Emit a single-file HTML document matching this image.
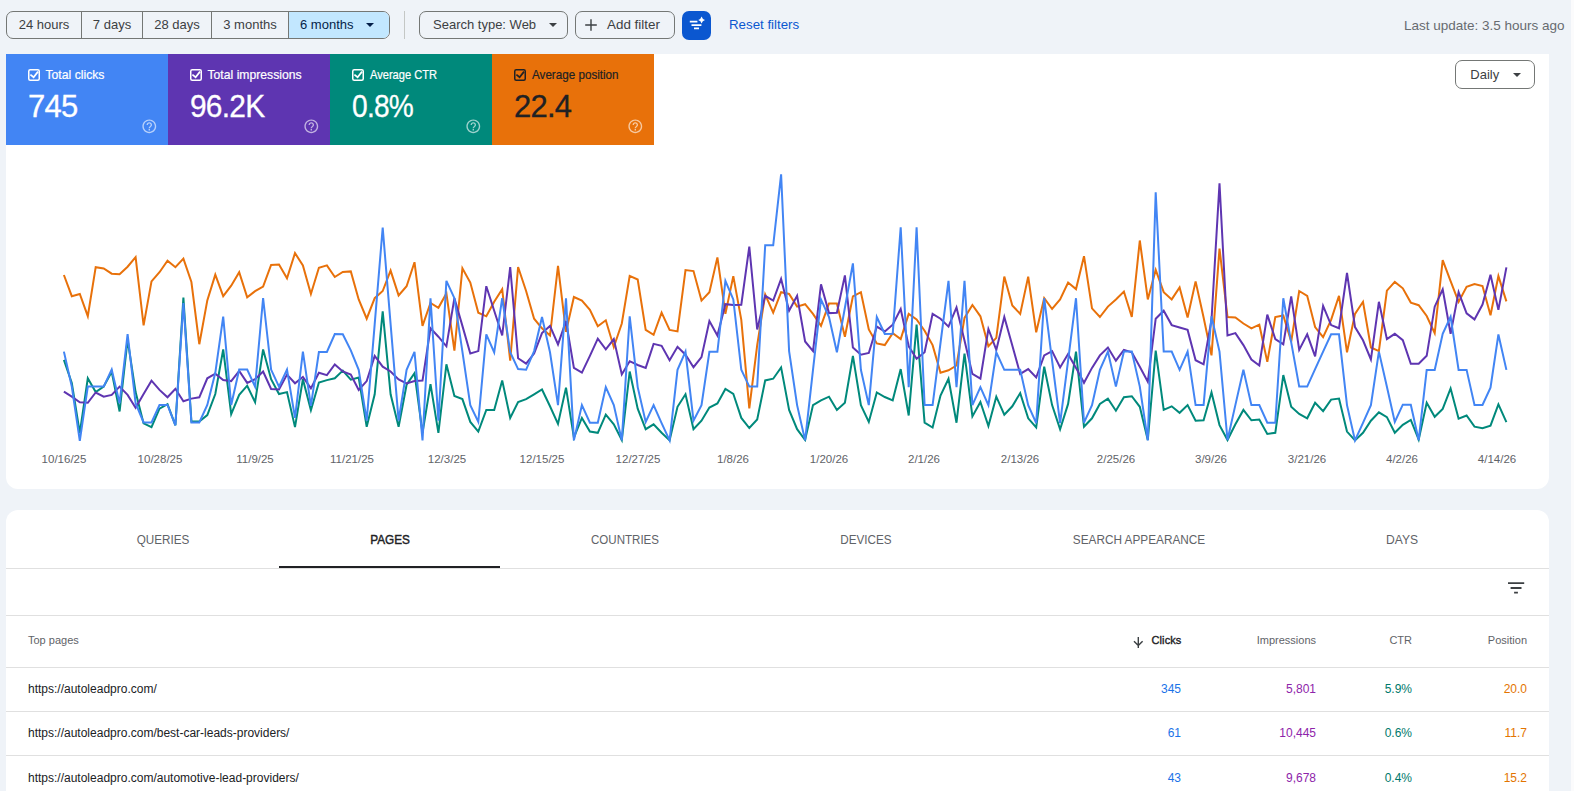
<!DOCTYPE html>
<html><head><meta charset="utf-8">
<style>
*{box-sizing:border-box;margin:0;padding:0}
html,body{width:1574px;height:791px;overflow:hidden;background:#eff3f8;font-family:"Liberation Sans",sans-serif;color:#3c4043}
.abs{position:absolute}
.seg{position:absolute;left:6px;top:11px;height:28px;width:384px;border:1px solid #747775;border-radius:7px;overflow:hidden;display:flex}
.seg div{height:26px;line-height:26px;font-size:13px;color:#3c4043;text-align:center;border-right:1px solid #747775;white-space:nowrap}
.seg div:last-child{border-right:none}
.chip{position:absolute;top:11px;height:28px;border:1px solid #747775;border-radius:7px;font-size:13px;line-height:26px;color:#3c4043;white-space:nowrap}
.card{position:absolute;left:6px;width:1543px;background:#fff}
.metric{position:absolute;top:54px;width:162px;height:91px;color:#fff}
.metric .cb{position:absolute;left:22px;top:15px;width:12px;height:12px}
.metric .lbl{position:absolute;left:39.5px;top:14px;font-size:12.2px;white-space:nowrap;-webkit-text-stroke:0.2px currentColor}
.metric .val{position:absolute;left:22px;top:35px;font-size:31px;letter-spacing:-0.8px;white-space:nowrap;-webkit-text-stroke:0.3px currentColor}
.metric .help{position:absolute;left:134.7px;top:63.6px;width:16.6px;height:16.6px}
.xl{position:absolute;top:453px;font-size:11.5px;color:#5f6368;white-space:nowrap;transform:translateX(-50%)}
.tab{position:absolute;top:532px;font-size:13.6px;color:#5f6368;white-space:nowrap;transform:translateX(-50%)}
.hl{position:absolute;left:6px;width:1543px;height:1px;background:#e0e0e0}
.th{position:absolute;top:634px;font-size:11px;color:#5f6368;white-space:nowrap}
.td{position:absolute;font-size:12px;white-space:nowrap}
.r{text-align:right}
</style></head><body>

<!-- top bar -->
<div class="seg">
  <div style="width:75px">24 hours</div>
  <div style="width:61px">7 days</div>
  <div style="width:69px">28 days</div>
  <div style="width:77px">3 months</div>
  <div style="position:relative;width:100px;background:#c2e7ff;color:#041e49;text-align:left;padding-left:11px">6 months<span class="abs" style="left:77px;top:11px;width:0;height:0;border-left:4px solid transparent;border-right:4px solid transparent;border-top:4px solid #041e49"></span></div>
</div>
<div class="abs" style="left:404px;top:11px;width:1px;height:28px;background:#c4c7c5"></div>
<div class="chip" style="left:419px;width:149px;padding-left:13px">Search type: Web<span class="abs" style="left:129px;top:11px;width:0;height:0;border-left:4px solid transparent;border-right:4px solid transparent;border-top:4px solid #3c4043"></span></div>
<div class="chip" style="left:575px;width:100px;padding-left:31px;font-size:13.4px">Add filter<svg class="abs" style="left:8px;top:6px" width="14" height="14" viewBox="0 0 14 14"><path d="M7 1.2v11.6M1.2 7h11.6" stroke="#3c4043" stroke-width="1.4"/></svg></div>
<div class="abs" style="left:682px;top:11px;width:29px;height:29px;background:#0b57d0;border-radius:7px">
  <svg width="29" height="29" viewBox="0 0 29 29"><path d="M7.8 10.6h7.6M9.5 14.1h9.9M12 17.4h5" stroke="#fff" stroke-width="1.7"/><path d="M19.6 5.6 Q20.3 8.3 23 9 Q20.3 9.7 19.6 12.4 Q18.9 9.7 16.2 9 Q18.9 8.3 19.6 5.6Z" fill="#fff"/></svg>
</div>
<div class="abs" style="left:729px;top:17px;font-size:13.3px;color:#0b57d0">Reset filters</div>
<div class="abs" style="left:1404px;top:17.6px;font-size:13.5px;color:#676b70;white-space:nowrap">Last update: 3.5 hours ago</div>

<!-- chart card -->
<div class="card" style="top:54px;height:435px;border-radius:0 0 12px 12px"></div>
<div class="metric" style="left:6px;background:#4285f4"><svg class="cb" viewBox="0 0 12 12"><rect x="0.75" y="0.75" width="10.5" height="10.5" rx="1.5" fill="none" stroke="#fff" stroke-width="1.5"/><path d="M2.4 5.6 5.6 8.2 10 2.6" fill="none" stroke="#fff" stroke-width="1.7"/></svg><div class="lbl">Total clicks</div><div class="val">745</div><svg class="help" viewBox="0 0 24 24"><path fill="rgba(255,255,255,.62)" d="M11 18h2v-2h-2v2zm1-16C6.48 2 2 6.48 2 12s4.48 10 10 10 10-4.48 10-10S17.52 2 12 2zm0 18c-4.41 0-8-3.59-8-8s3.59-8 8-8 8 3.59 8 8-3.59 8-8 8zm0-14c-2.210 0-4 1.79-4 4h2c0-1.1.9-2 2-2s2 .9 2 2c0 2-3 1.75-3 5h2c0-2.25 3-2.5 3-5 0-2.21-1.790-4-4-4z"/></svg></div>
<div class="metric" style="left:168px;background:#5e35b1"><svg class="cb" viewBox="0 0 12 12"><rect x="0.75" y="0.75" width="10.5" height="10.5" rx="1.5" fill="none" stroke="#fff" stroke-width="1.5"/><path d="M2.4 5.6 5.6 8.2 10 2.6" fill="none" stroke="#fff" stroke-width="1.7"/></svg><div class="lbl">Total impressions</div><div class="val" style="transform:scaleX(.965);transform-origin:0 0">96.2K</div><svg class="help" viewBox="0 0 24 24"><path fill="rgba(255,255,255,.62)" d="M11 18h2v-2h-2v2zm1-16C6.48 2 2 6.48 2 12s4.48 10 10 10 10-4.48 10-10S17.52 2 12 2zm0 18c-4.41 0-8-3.59-8-8s3.59-8 8-8 8 3.59 8 8-3.59 8-8 8zm0-14c-2.210 0-4 1.79-4 4h2c0-1.1.9-2 2-2s2 .9 2 2c0 2-3 1.75-3 5h2c0-2.25 3-2.5 3-5 0-2.21-1.790-4-4-4z"/></svg></div>
<div class="metric" style="left:330px;background:#00897b"><svg class="cb" viewBox="0 0 12 12"><rect x="0.75" y="0.75" width="10.5" height="10.5" rx="1.5" fill="none" stroke="#fff" stroke-width="1.5"/><path d="M2.4 5.6 5.6 8.2 10 2.6" fill="none" stroke="#fff" stroke-width="1.7"/></svg><div class="lbl" style="transform:scaleX(.91);transform-origin:0 0">Average CTR</div><div class="val" style="transform:scaleX(.906);transform-origin:0 0">0.8%</div><svg class="help" viewBox="0 0 24 24"><path fill="rgba(255,255,255,.62)" d="M11 18h2v-2h-2v2zm1-16C6.48 2 2 6.48 2 12s4.48 10 10 10 10-4.48 10-10S17.52 2 12 2zm0 18c-4.41 0-8-3.59-8-8s3.59-8 8-8 8 3.59 8 8-3.59 8-8 8zm0-14c-2.210 0-4 1.79-4 4h2c0-1.1.9-2 2-2s2 .9 2 2c0 2-3 1.75-3 5h2c0-2.25 3-2.5 3-5 0-2.21-1.790-4-4-4z"/></svg></div>
<div class="metric" style="left:492px;background:#e8710a;color:#202124"><svg class="cb" viewBox="0 0 12 12"><rect x="0.75" y="0.75" width="10.5" height="10.5" rx="1.5" fill="none" stroke="#202124" stroke-width="1.5"/><path d="M2.4 5.6 5.6 8.2 10 2.6" fill="none" stroke="#202124" stroke-width="1.7"/></svg><div class="lbl" style="transform:scaleX(.956);transform-origin:0 0">Average position</div><div class="val">22.4</div><svg class="help" viewBox="0 0 24 24"><path fill="rgba(255,255,255,.62)" d="M11 18h2v-2h-2v2zm1-16C6.48 2 2 6.48 2 12s4.48 10 10 10 10-4.48 10-10S17.52 2 12 2zm0 18c-4.41 0-8-3.59-8-8s3.59-8 8-8 8 3.59 8 8-3.59 8-8 8zm0-14c-2.210 0-4 1.79-4 4h2c0-1.1.9-2 2-2s2 .9 2 2c0 2-3 1.75-3 5h2c0-2.25 3-2.5 3-5 0-2.21-1.790-4-4-4z"/></svg></div>

<div class="abs" style="left:1455px;top:60px;width:80px;height:29px;border:1px solid #747775;border-radius:7px;font-size:13px;line-height:27px;padding-left:14.3px;color:#3c4043">Daily<span class="abs" style="left:57px;top:12px;width:0;height:0;border-left:4px solid transparent;border-right:4px solid transparent;border-top:4px solid #3c4043"></span></div>

<svg id="chart" class="abs" style="left:0;top:0" width="1574" height="491"><polyline fill="none" stroke="#e8710a" stroke-width="2" points="63.9,275.0 71.8,296.2 79.8,294.0 87.8,316.2 95.7,267.2 103.7,268.5 111.7,273.7 119.6,274.2 127.6,266.7 135.6,257.1 143.6,325.4 151.5,281.4 159.5,272.2 167.5,260.8 175.4,267.2 183.4,258.6 191.4,282.0 199.3,344.2 207.3,300.4 215.3,274.6 223.2,296.2 231.2,285.7 239.2,272.2 247.2,297.3 255.1,291.2 263.1,286.6 271.1,264.9 279.0,264.5 287.0,278.3 295.0,253.1 302.9,265.4 310.9,294.0 318.9,267.8 326.9,265.4 334.8,277.0 342.8,272.0 350.8,271.4 358.7,299.4 366.7,318.7 374.7,298.2 382.7,291.0 390.6,270.6 398.6,295.4 406.6,286.2 414.5,262.2 422.5,325.9 430.5,303.0 438.4,307.8 446.4,293.4 454.4,350.6 462.4,268.2 470.3,282.6 478.3,312.7 486.3,316.3 494.2,301.8 502.2,289.1 510.2,360.7 518.1,267.0 526.1,291.0 534.1,318.7 542.0,328.3 550.0,335.5 558.0,265.8 566.0,331.9 573.9,297.0 581.9,300.6 589.9,309.8 597.8,326.3 605.8,320.3 613.8,347.0 621.8,323.5 629.7,275.9 637.7,279.5 645.7,329.9 653.6,334.8 661.6,312.7 669.6,329.9 677.5,331.4 685.5,270.1 693.5,271.1 701.5,300.6 709.4,292.2 717.4,257.4 725.4,313.9 733.3,276.1 741.3,319.9 749.3,408.3 757.2,345.1 765.2,294.6 773.2,312.7 781.1,292.2 789.1,293.9 797.1,306.6 805.1,304.2 813.0,313.9 821.0,325.9 829.0,303.5 836.9,303.5 844.9,336.7 852.9,296.3 860.9,292.2 868.8,329.5 876.8,343.4 884.8,345.1 892.7,333.1 900.7,339.1 908.7,313.9 916.6,319.4 924.6,330.7 932.6,345.1 940.5,372.7 948.5,370.3 956.5,365.5 964.5,317.9 972.4,305.0 980.4,316.3 988.4,346.3 996.3,337.9 1004.3,276.6 1012.3,305.4 1020.2,313.9 1028.2,276.6 1036.2,332.3 1044.2,298.2 1052.1,309.0 1060.1,299.4 1068.1,282.6 1076.0,289.1 1084.0,256.2 1092.0,308.3 1099.9,317.0 1107.9,306.6 1115.9,299.4 1123.9,291.5 1131.8,317.0 1139.8,240.5 1147.8,299.4 1155.7,269.9 1163.7,292.2 1171.7,299.4 1179.6,287.4 1187.6,317.5 1195.6,281.4 1203.6,317.5 1211.5,355.4 1219.5,248.5 1227.5,317.0 1235.4,317.5 1243.4,323.5 1251.4,328.3 1259.3,324.7 1267.3,361.9 1275.3,317.0 1283.3,315.5 1291.2,341.5 1299.2,291.0 1307.2,295.8 1315.1,327.1 1323.1,337.2 1331.1,319.9 1339.0,295.8 1347.0,352.3 1355.0,313.9 1363.0,301.8 1370.9,347.5 1378.9,351.1 1386.9,290.6 1394.8,281.9 1402.8,288.3 1410.8,302.6 1418.7,305.2 1426.7,316.0 1434.7,333.2 1442.7,260.2 1450.6,281.1 1458.6,301.9 1466.6,286.8 1474.5,284.1 1482.5,286.0 1490.5,315.2 1498.4,276.1 1506.4,301.4"/>
<polyline fill="none" stroke="#00897b" stroke-width="2" points="63.9,359.9 71.8,382.9 79.8,433.0 87.8,378.3 95.7,392.1 103.7,386.6 111.7,371.8 119.6,411.5 127.6,339.6 135.6,392.1 143.6,423.4 151.5,427.1 159.5,408.7 167.5,404.1 175.4,425.3 183.4,297.6 191.4,421.6 199.3,421.6 207.3,415.1 215.3,394.0 223.2,349.4 231.2,414.2 239.2,394.9 247.2,385.7 255.1,402.2 263.1,349.4 271.1,379.2 279.0,394.0 287.0,392.1 295.0,427.1 302.9,379.2 310.9,410.2 318.9,382.5 326.9,380.1 334.8,378.3 342.8,370.6 350.8,379.6 358.7,377.5 366.7,426.8 374.7,394.3 382.7,311.4 390.6,394.3 398.6,426.8 406.6,384.7 414.5,373.2 422.5,432.8 430.5,384.2 438.4,432.8 446.4,364.3 454.4,396.0 462.4,399.1 470.3,421.9 478.3,431.6 486.3,409.9 494.2,409.9 502.2,380.4 510.2,417.9 518.1,402.0 526.1,399.1 534.1,394.3 542.0,389.5 550.0,406.3 558.0,423.9 566.0,387.6 573.9,437.6 581.9,417.9 589.9,431.6 597.8,432.8 605.8,414.7 613.8,424.3 621.8,440.0 629.7,371.5 637.7,408.7 645.7,429.2 653.6,424.3 661.6,432.8 669.6,440.4 677.5,406.8 685.5,394.3 693.5,429.2 701.5,420.7 709.4,407.5 717.4,403.5 725.4,389.0 733.3,393.8 741.3,417.9 749.3,428.0 757.2,419.5 765.2,380.4 773.2,378.7 781.1,367.4 789.1,409.9 797.1,429.2 805.1,440.0 813.0,405.1 821.0,400.3 829.0,396.7 836.9,409.9 844.9,402.7 852.9,355.9 860.9,405.1 868.8,421.9 876.8,392.4 884.8,397.0 892.7,400.3 900.7,369.1 908.7,415.5 916.6,324.7 924.6,422.7 932.6,427.5 940.5,395.5 948.5,378.7 956.5,422.7 964.5,353.5 972.4,416.4 980.4,402.0 988.4,426.0 996.3,396.7 1004.3,414.7 1012.3,406.3 1020.2,393.1 1028.2,418.3 1036.2,427.5 1044.2,366.7 1052.1,405.1 1060.1,429.2 1068.1,403.9 1076.0,351.6 1084.0,426.8 1092.0,418.3 1099.9,403.9 1107.9,398.6 1115.9,410.7 1123.9,397.2 1131.8,396.2 1139.8,406.8 1147.8,440.0 1155.7,350.6 1163.7,409.9 1171.7,406.3 1179.6,412.8 1187.6,405.1 1195.6,420.7 1203.6,420.3 1211.5,392.4 1219.5,425.1 1227.5,440.0 1235.4,424.3 1243.4,409.9 1251.4,420.3 1259.3,419.5 1267.3,434.0 1275.3,432.8 1283.3,375.1 1291.2,406.8 1299.2,414.0 1307.2,418.3 1315.1,402.7 1323.1,411.1 1331.1,399.6 1339.0,398.6 1347.0,431.6 1355.0,440.4 1363.0,432.8 1370.9,420.7 1378.9,412.3 1386.9,417.1 1394.8,432.8 1402.8,424.9 1410.8,419.9 1418.7,439.7 1426.7,402.8 1434.7,416.8 1442.7,408.9 1450.6,388.4 1458.6,418.7 1466.6,415.5 1474.5,426.7 1482.5,428.3 1490.5,425.6 1498.4,404.4 1506.4,422.2"/>
<polyline fill="none" stroke="#5e35b1" stroke-width="2" points="63.9,391.6 71.8,396.7 79.8,402.2 87.8,402.8 95.7,392.5 103.7,396.7 111.7,394.9 119.6,386.6 127.6,394.9 135.6,407.8 143.6,394.0 151.5,380.7 159.5,389.9 167.5,397.3 175.4,388.8 183.4,401.3 191.4,398.6 199.3,397.3 207.3,378.3 215.3,373.7 223.2,380.1 231.2,381.1 239.2,370.9 247.2,382.9 255.1,379.2 263.1,371.5 271.1,389.0 279.0,389.4 287.0,374.6 295.0,383.3 302.9,377.0 310.9,388.4 318.9,372.8 326.9,375.2 334.8,364.5 342.8,371.5 350.8,374.6 358.7,390.0 366.7,381.1 374.7,355.9 382.7,366.7 390.6,371.5 398.6,379.4 406.6,383.5 414.5,381.1 422.5,380.6 430.5,328.3 438.4,336.7 446.4,346.3 454.4,298.2 462.4,325.9 470.3,353.5 478.3,351.1 486.3,286.2 494.2,310.8 502.2,335.5 510.2,267.0 518.1,358.3 526.1,363.6 534.1,353.5 542.0,333.1 550.0,325.9 558.0,344.4 566.0,321.1 573.9,367.9 581.9,372.7 589.9,355.9 597.8,338.6 605.8,349.4 613.8,339.1 621.8,374.4 629.7,361.2 637.7,365.0 645.7,367.9 653.6,343.9 661.6,345.8 669.6,360.2 677.5,346.8 685.5,354.7 693.5,367.2 701.5,357.1 709.4,321.1 717.4,335.5 725.4,304.2 733.3,305.0 741.3,304.7 749.3,246.6 757.2,329.5 765.2,295.8 773.2,300.6 781.1,279.0 789.1,310.7 797.1,295.8 805.1,341.5 813.0,351.1 821.0,284.3 829.0,313.1 836.9,312.7 844.9,275.4 852.9,347.5 860.9,354.7 868.8,353.0 876.8,326.6 884.8,331.4 892.7,324.7 900.7,309.0 908.7,346.3 916.6,358.8 924.6,352.3 932.6,313.9 940.5,318.7 948.5,326.6 956.5,307.4 964.5,340.6 972.4,373.9 980.4,378.7 988.4,329.0 996.3,349.9 1004.3,317.0 1012.3,345.4 1020.2,373.9 1028.2,369.1 1036.2,377.5 1044.2,355.4 1052.1,351.1 1060.1,367.4 1068.1,354.0 1076.0,367.9 1084.0,382.8 1092.0,367.9 1099.9,355.4 1107.9,347.5 1115.9,360.7 1123.9,349.9 1131.8,352.3 1139.8,366.7 1147.8,381.8 1155.7,318.7 1163.7,310.7 1171.7,325.1 1179.6,327.5 1187.6,329.9 1195.6,360.2 1203.6,364.3 1211.5,320.0 1219.5,183.3 1227.5,335.5 1235.4,333.1 1243.4,345.1 1251.4,359.5 1259.3,365.5 1267.3,314.6 1275.3,339.1 1283.3,344.4 1291.2,296.3 1299.2,349.9 1307.2,334.3 1315.1,356.4 1323.1,305.9 1331.1,325.1 1339.0,328.3 1347.0,273.0 1355.0,327.1 1363.0,340.3 1370.9,359.5 1378.9,301.8 1386.9,339.1 1394.8,333.8 1402.8,340.1 1410.8,363.7 1418.7,363.7 1426.7,355.8 1434.7,306.7 1442.7,289.4 1450.6,333.8 1458.6,292.1 1466.6,313.3 1474.5,319.4 1482.5,304.6 1490.5,274.8 1498.4,309.9 1506.4,267.4"/>
<polyline fill="none" stroke="#4285f4" stroke-width="2" points="63.9,351.6 71.8,386.6 79.8,440.9 87.8,386.6 95.7,386.6 103.7,386.6 111.7,369.6 119.6,403.2 127.6,334.1 135.6,403.2 143.6,422.5 151.5,422.5 159.5,405.0 167.5,405.0 175.4,425.3 183.4,303.0 191.4,422.5 199.3,422.5 207.3,405.0 215.3,372.8 223.2,316.6 231.2,405.0 239.2,369.6 247.2,369.6 255.1,386.6 263.1,298.0 271.1,369.6 279.0,386.6 287.0,369.6 295.0,417.9 302.9,351.6 310.9,405.9 318.9,352.0 326.9,352.0 334.8,334.1 342.8,334.2 350.8,350.4 358.7,369.8 366.7,420.7 374.7,324.2 382.7,227.6 390.6,324.2 398.6,420.7 406.6,369.8 414.5,351.8 422.5,440.4 430.5,298.2 438.4,420.7 446.4,280.9 454.4,298.2 462.4,351.7 470.3,405.1 478.3,421.9 486.3,334.3 494.2,352.3 502.2,298.2 510.2,352.3 518.1,369.1 526.1,369.8 534.1,351.1 542.0,317.0 550.0,352.3 558.0,405.1 566.0,298.2 573.9,440.4 581.9,405.1 589.9,422.7 597.8,422.7 605.8,387.1 613.8,405.1 621.8,440.4 629.7,316.3 637.7,387.1 645.7,421.9 653.6,405.1 661.6,423.1 669.6,440.4 677.5,369.8 685.5,351.6 693.5,420.7 701.5,405.1 709.4,351.8 717.4,351.8 725.4,280.9 733.3,299.4 741.3,369.8 749.3,386.6 757.2,386.6 765.2,245.3 773.2,245.3 781.1,174.3 789.1,351.1 797.1,405.1 805.1,440.4 813.0,369.9 821.0,299.4 829.0,317.0 836.9,352.3 844.9,307.8 852.9,263.4 860.9,369.8 868.8,405.1 876.8,317.0 884.8,334.0 892.7,333.8 900.7,227.2 908.7,387.1 916.6,227.2 924.6,405.1 932.6,405.1 940.5,343.0 948.5,280.9 956.5,387.1 964.5,280.9 972.4,405.1 980.4,387.1 988.4,405.1 996.3,352.3 1004.3,369.8 1012.3,369.8 1020.2,369.8 1028.2,405.1 1036.2,423.1 1044.2,298.2 1052.1,360.7 1060.1,423.1 1068.1,360.7 1076.0,298.2 1084.0,422.7 1092.0,405.1 1099.9,369.8 1107.9,351.6 1115.9,386.6 1123.9,351.6 1131.8,351.6 1139.8,386.6 1147.8,440.4 1155.7,192.4 1163.7,351.6 1171.7,351.6 1179.6,369.8 1187.6,351.6 1195.6,405.1 1203.6,405.1 1211.5,316.3 1219.5,351.6 1227.5,440.0 1235.4,404.9 1243.4,369.8 1251.4,405.1 1259.3,405.1 1267.3,422.7 1275.3,422.7 1283.3,298.2 1291.2,342.4 1299.2,386.6 1307.2,386.6 1315.1,369.2 1323.1,351.7 1331.1,334.3 1339.0,334.3 1347.0,405.1 1355.0,440.4 1363.0,422.8 1370.9,405.1 1378.9,351.6 1386.9,386.8 1394.8,421.9 1402.8,404.7 1410.8,404.7 1418.7,440.2 1426.7,369.9 1434.7,369.9 1442.7,333.8 1450.6,316.8 1458.6,369.9 1466.6,369.9 1474.5,404.9 1482.5,404.9 1490.5,387.6 1498.4,334.5 1506.4,369.9"/></svg>

<div class="xl" style="left:64px">10/16/25</div>
<div class="xl" style="left:160px">10/28/25</div>
<div class="xl" style="left:255px">11/9/25</div>
<div class="xl" style="left:352px">11/21/25</div>
<div class="xl" style="left:447px">12/3/25</div>
<div class="xl" style="left:542px">12/15/25</div>
<div class="xl" style="left:638px">12/27/25</div>
<div class="xl" style="left:733px">1/8/26</div>
<div class="xl" style="left:829px">1/20/26</div>
<div class="xl" style="left:924px">2/1/26</div>
<div class="xl" style="left:1020px">2/13/26</div>
<div class="xl" style="left:1116px">2/25/26</div>
<div class="xl" style="left:1211px">3/9/26</div>
<div class="xl" style="left:1307px">3/21/26</div>
<div class="xl" style="left:1402px">4/2/26</div>
<div class="xl" style="left:1497px">4/14/26</div>

<!-- table card -->
<div class="card" style="top:510px;height:300px;border-radius:12px 12px 0 0"></div>
<div class="tab" style="left:163.2px;transform:translateX(-50%) scaleX(.86)">QUERIES</div>
<div class="tab" style="left:389.9px;color:#202124;-webkit-text-stroke:0.45px #202124;transform:translateX(-50%) scaleX(.865)">PAGES</div>
<div class="tab" style="left:624.8px;transform:translateX(-50%) scaleX(.85)">COUNTRIES</div>
<div class="tab" style="left:865.6px;transform:translateX(-50%) scaleX(.86)">DEVICES</div>
<div class="tab" style="left:1138.7px;transform:translateX(-50%) scaleX(.867)">SEARCH APPEARANCE</div>
<div class="tab" style="left:1402px;transform:translateX(-50%) scaleX(.89)">DAYS</div>
<div class="hl" style="top:568px"></div>
<div class="abs" style="left:279px;top:566px;width:221px;height:2px;background:#202124"></div>
<svg class="abs" style="left:1500px;top:575px" width="30" height="25" viewBox="0 0 30 25"><path d="M8 8.2h16.2M10.6 13h10.9M14.1 17.6h3.8" stroke="#3c4043" stroke-width="1.8"/></svg>
<div class="hl" style="top:615px"></div>
<div class="th" style="left:28px">Top pages</div>
<svg class="abs" style="left:1130px;top:634px" width="16" height="14" viewBox="0 0 16 14"><path d="M8.3 3v11M4 7.2l4.3 4.4 4.3-4.4" fill="none" stroke="#3c4043" stroke-width="1.4"/></svg>
<div class="th" style="left:1151.5px;color:#202124;-webkit-text-stroke:0.35px #202124;letter-spacing:0.1px">Clicks</div>
<div class="th r" style="right:258px">Impressions</div>
<div class="th r" style="right:162px">CTR</div>
<div class="th r" style="right:47px">Position</div>
<div class="hl" style="top:667px"></div>
<div class="td" style="left:28px;top:682px;color:#202124">https://autoleadpro.com/</div>
<div class="td r" style="right:393px;top:682px;color:#1a73e8">345</div>
<div class="td r" style="right:258px;top:682px;color:#8e24aa">5,801</div>
<div class="td r" style="right:162px;top:682px;color:#00796b">5.9%</div>
<div class="td r" style="right:47px;top:682px;color:#e37400">20.0</div>
<div class="hl" style="top:711px"></div>
<div class="td" style="left:28px;top:726px;color:#202124">https://autoleadpro.com/best-car-leads-providers/</div>
<div class="td r" style="right:393px;top:726px;color:#1a73e8">61</div>
<div class="td r" style="right:258px;top:726px;color:#8e24aa">10,445</div>
<div class="td r" style="right:162px;top:726px;color:#00796b">0.6%</div>
<div class="td r" style="right:47px;top:726px;color:#e37400">11.7</div>
<div class="hl" style="top:755px"></div>
<div class="td" style="left:28px;top:771px;color:#202124">https://autoleadpro.com/automotive-lead-providers/</div>
<div class="td r" style="right:393px;top:771px;color:#1a73e8">43</div>
<div class="td r" style="right:258px;top:771px;color:#8e24aa">9,678</div>
<div class="td r" style="right:162px;top:771px;color:#00796b">0.4%</div>
<div class="td r" style="right:47px;top:771px;color:#e37400">15.2</div>

<div class="abs" style="left:1571px;top:0;width:3px;height:791px;background:#fbfbfc"></div>
</body></html>
